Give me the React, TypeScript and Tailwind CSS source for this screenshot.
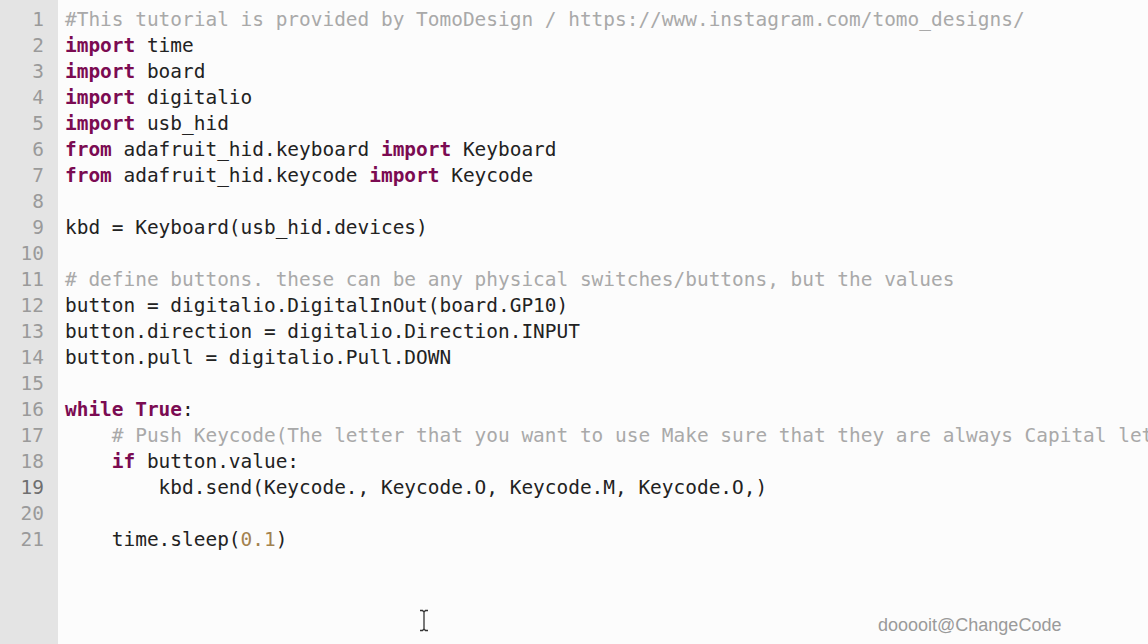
import React from "react";

type Kind = "kw" | "cm" | "num" | "tx";
type Tok = [string, Kind];

const lines: Tok[][] = [
  [["#This tutorial is provided by TomoDesign / https://www.instagram.com/tomo_designs/", "cm"]],
  [["import", "kw"], [" time", "tx"]],
  [["import", "kw"], [" board", "tx"]],
  [["import", "kw"], [" digitalio", "tx"]],
  [["import", "kw"], [" usb_hid", "tx"]],
  [["from", "kw"], [" adafruit_hid.keyboard ", "tx"], ["import", "kw"], [" Keyboard", "tx"]],
  [["from", "kw"], [" adafruit_hid.keycode ", "tx"], ["import", "kw"], [" Keycode", "tx"]],
  [],
  [["kbd = Keyboard(usb_hid.devices)", "tx"]],
  [],
  [["# define buttons. these can be any physical switches/buttons, but the values", "cm"]],
  [["button = digitalio.DigitalInOut(board.GP10)", "tx"]],
  [["button.direction = digitalio.Direction.INPUT", "tx"]],
  [["button.pull = digitalio.Pull.DOWN", "tx"]],
  [],
  [["while", "kw"], [" ", "tx"], ["True", "kw"], [":", "tx"]],
  [["    ", "tx"], ["# Push Keycode(The letter that you want to use Make sure that they are always Capital letters)", "cm"]],
  [["    ", "tx"], ["if", "kw"], [" button.value:", "tx"]],
  [["        kbd.send(Keycode., Keycode.O, Keycode.M, Keycode.O,)", "tx"]],
  [],
  [["    time.sleep(", "tx"], ["0.1", "num"], [")", "tx"]],
];

const kindClass: Record<Kind, string> = {
  kw: "text-[#7b0b52] font-bold",
  cm: "text-[#a9a9a9]",
  num: "text-[#a3824f]",
  tx: "text-[#222222]",
};

const CodeLine: React.FC<{ toks: Tok[] }> = ({ toks }) => (
  <div className="h-[26px] whitespace-pre">
    {toks.map(([t, k], i) => (
      <span key={i} className={kindClass[k]}>
        {t}
      </span>
    ))}
    {toks.length === 0 && " "}
  </div>
);

export default function App() {
  return (
    <div className="relative flex h-[644px] w-[1148px] overflow-hidden bg-[#fcfcfc] font-['DejaVu_Sans_Mono',monospace] text-[19.45px] leading-[26px]">
      {/* gutter */}
      <div className="flex w-[58px] shrink-0 flex-col items-end bg-[#e4e4e4] pt-[7px] pr-[14px]">
        {lines.map((_, i) => (
          <div
            key={i}
            className={i === 18 ? "h-[26px] text-[#6f6f6f]" : "h-[26px] text-[#9a9a9a]"}
          >
            {i + 1}
          </div>
        ))}
      </div>

      {/* code */}
      <div className="min-w-0 flex-1 overflow-hidden pt-[7px] pl-[7px]">
        {lines.map((toks, i) => (
          <CodeLine key={i} toks={toks} />
        ))}
      </div>

      {/* text cursor */}
      <svg
        className="absolute left-[419px] top-[609px]"
        width="10"
        height="23"
        viewBox="0 0 10 23"
      >
        <path
          d="M1 1.5h2.5L5 3l1.5-1.5H9M5 3v17M1 21.5h2.5L5 20l1.5 1.5H9"
          fill="none"
          stroke="#333"
          strokeWidth="1.3"
        />
      </svg>

      {/* watermark */}
      <div className="absolute left-[878px] top-[613px] font-['Liberation_Sans',Arial,sans-serif] text-[18px] leading-[24px] text-[#9a9a9a]">
        dooooit@ChangeCode
      </div>
    </div>
  );
}
